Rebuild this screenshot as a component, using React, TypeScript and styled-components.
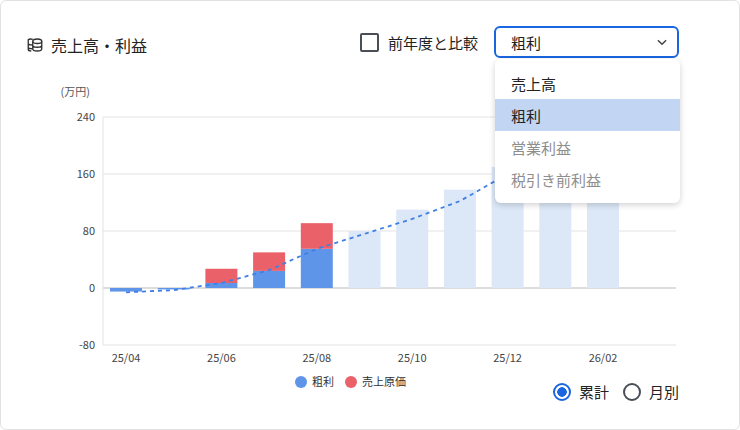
import React from "react";
import styled, { createGlobalStyle } from "styled-components";

const G = createGlobalStyle`
  html,body{margin:0;padding:0;background:#fff;}
  body{font-family:"Noto Sans CJK JP","Noto Sans",sans-serif;color:#222;}
`;
const Card = styled.div`
  position:relative;width:740px;height:430px;box-sizing:border-box;
  border:1px solid #e2e2e2;border-radius:6px;overflow:hidden;
`;
const Header = styled.div`
  display:flex;align-items:center;height:32px;margin:25px 60px 0 25px;
`;
const Title = styled.div`
  display:flex;align-items:center;gap:7px;font-size:16px;flex:1;padding-top:5px;
`;
const Check = styled.label`
  display:flex;align-items:center;gap:9px;font-size:15px;margin-right:16px;
`;
const Box = styled.span`
  width:15px;height:15px;border:2px solid #4a4f57;border-radius:2px;
`;
const Select = styled.div`
  width:185px;height:32px;box-sizing:border-box;border:2px solid #1a66e0;border-radius:6px;
  display:flex;align-items:center;justify-content:space-between;padding:0 8px 0 15px;font-size:15px;
`;
const Menu = styled.div`
  position:absolute;left:494px;top:58px;width:185px;padding:8px 0;background:#fff;
  border-radius:6px;box-shadow:0 2px 6px rgba(0,0,0,.18);z-index:2;
`;
const Item = styled.div<{ $sel?: boolean; $dis?: boolean }>`
  height:32px;display:flex;align-items:center;padding-left:16px;font-size:15px;
  background:${p => (p.$sel ? "#c2d6f4" : "transparent")};
  color:${p => (p.$dis ? "#8e8e8e" : "#222")};
`;
const Chart = styled.svg`display:block;margin-top:21px;`;
const Footer = styled.div`
  display:flex;justify-content:flex-end;gap:14px;margin:-28px 60px 0 0;
`;
const Radio = styled.div<{ $on?: boolean }>`
  display:flex;align-items:center;gap:8px;font-size:15px;
  &::before{content:"";width:14px;height:14px;border-radius:50%;
    border:2px solid ${p => (p.$on ? "#1a66e0" : "#4a4f57")};
    background:${p => (p.$on ? "radial-gradient(circle,#1a66e0 0 4.5px,#fff 5px)" : "#fff")};}
`;

const y = (v: number) => 287 - (v * 57) / 80;
const cx = (i: number) => 125 + i * 47.7;
const solid = [
  { p: -5, c: 0 }, { p: -2, c: 0 }, { p: 7, c: 20 }, { p: 24, c: 26 }, { p: 55, c: 36 },
];
const light = [80, 110, 138, 170, 200, 215];
const labels = ["25/04", "25/06", "25/08", "25/10", "25/12", "26/02"];
const line = [-6, -3, 7, 25, 55, 76, 97, 122, 160, 200, 215];

export default function App() {
  const pts = line.map((v, i) => `${cx(i)},${y(v)}`).join(" ");
  return (
    <Card>
      <G />
      <Header>
        <Title>
          <svg width="18" height="18" viewBox="0 0 24 24" fill="none" stroke="#333" strokeWidth="1.8">
            <ellipse cx="15" cy="7" rx="6" ry="3" />
            <path d="M9 7v10c0 1.7 2.7 3 6 3s6-1.3 6-3V7M9 12c0 1.7 2.7 3 6 3s6-1.3 6-3" />
            <path d="M9 4.5C8 4 7 4 6 4 4 4 3 5 3 5v13c0 1 1.5 2 4 2M3 10c0 1 1.5 2 6 2M3 15c0 1 2 2 6 2" />
          </svg>
          売上高・利益
        </Title>
        <Check><Box />前年度と比較</Check>
        <Select>粗利
          <svg width="14" height="14" viewBox="0 0 24 24" fill="none" stroke="#444" strokeWidth="2.5"><path d="M5 9l7 7 7-7" /></svg>
        </Select>
      </Header>
      <Menu>
        <Item>売上高</Item>
        <Item $sel>粗利</Item>
        <Item $dis>営業利益</Item>
        <Item $dis>税引き前利益</Item>
      </Menu>
      <Chart width="740" height="330" viewBox="0 78 740 330">
        <text x="89" y="95" fontSize="11" fill="#555" textAnchor="end">(万円)</text>
        {[240, 160, 80, 0, -80].map(v => (
          <g key={v}>
            <line x1="102" x2="675" y1={y(v)} y2={y(v)} stroke={v === 0 ? "#ddd" : "#e3e3e3"} strokeWidth={v === 0 ? 2 : 1} />
            <text x="94" y={y(v) + 4} fontSize="11" fill="#444" textAnchor="end">{v}</text>
          </g>
        ))}
        <line x1="102" x2="102" y1={y(240)} y2={y(-80)} stroke="#e3e3e3" />
        {solid.map((s, i) => (
          <g key={i}>
            {s.p >= 0 ? (
              <rect x={cx(i) - 16} y={y(s.p)} width="32" height={287 - y(s.p)} fill="#5f95e8" />
            ) : (
              <rect x={cx(i) - 16} y={287} width="32" height={y(s.p) - 287} fill="#5f95e8" />
            )}
            {s.c > 0 && <rect x={cx(i) - 16} y={y(s.p + s.c)} width="32" height={y(s.p) - y(s.p + s.c)} fill="#ea6169" />}
          </g>
        ))}
        {light.map((v, i) => (
          <rect key={i} x={cx(i + 5) - 16} y={y(v)} width="32" height={287 - y(v)} fill="#dce8f8" />
        ))}
        <polyline points={pts} fill="none" stroke="#3f7fe6" strokeWidth="1.8" strokeDasharray="4 4" />
        {labels.map((l, i) => (
          <text key={l} x={cx(i * 2)} y="361" fontSize="11" fill="#444" textAnchor="middle">{l}</text>
        ))}
        <circle cx="300" cy="381" r="6" fill="#5f95e8" />
        <text x="311" y="385" fontSize="11" fill="#333">粗利</text>
        <circle cx="350" cy="381" r="6" fill="#ea6169" />
        <text x="361" y="385" fontSize="11" fill="#333">売上原価</text>
      </Chart>
      <Footer>
        <Radio $on>累計</Radio>
        <Radio>月別</Radio>
      </Footer>
    </Card>
  );
}
